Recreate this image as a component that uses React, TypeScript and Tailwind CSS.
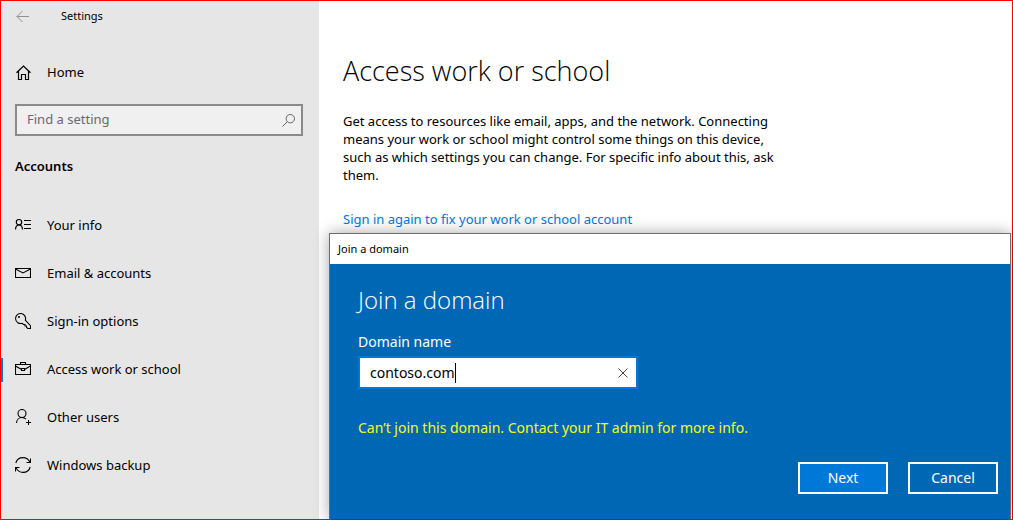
import type { ReactNode } from "react";

type IconProps = { children: ReactNode; size?: number };

function Icon({ children, size = 16 }: IconProps) {
  return (
    <svg
      width={size}
      height={size}
      viewBox={`0 0 ${size} ${size}`}
      fill="none"
      stroke="currentColor"
      strokeWidth="1"
      aria-hidden="true"
      className="shrink-0"
    >
      {children}
    </svg>
  );
}

const HomeIcon = () => (
  <Icon>
    <path d="M1.5 7.8 8.5 1l7 6.8M3.5 6v8.5h3v-5h4v5h3V6" strokeWidth="1.2" />
  </Icon>
);

const InfoIcon = () => (
  <Icon>
    <circle cx="4" cy="5.2" r="2.7" strokeWidth="1.2" />
    <path d="M.5 12.500C.6 9.800 2 8 4 8s3.400 1.800 3.500 4.500" strokeWidth="1.2" />
    <path d="M9 3.500h7M9 7.500h7M9 11.500h7" />
  </Icon>
);

const MailIcon = () => (
  <Icon>
    <path d="M.5 3.500h15v9H.5zM.5 4 8 8l7.500-4" strokeWidth="1.1" />
  </Icon>
);

const KeyIcon = () => (
  <Icon>
    <path
      d="M10.300 7.200a5 5 0 1 0-3.200 3.100l1.400 1.200h1.500v1.500h1.500v1.300l1.300 1.200h2.700v-2.800z"
      strokeWidth="1.1"
    />
    <path d="M3 4h2M4 3v2" />
  </Icon>
);

const BriefcaseIcon = () => (
  <Icon>
    <path
      d="M.5 3.500h15v10H.5zM5.500 3.500v-2h5v2M.5 5 6.500 8.500m3 0 6-3.500M6.500 7.500h3v2h-3z"
      strokeWidth="1.1"
    />
  </Icon>
);

const OtherUsersIcon = () => (
  <Icon>
    <circle cx="7" cy="4.500" r="4" strokeWidth="1.1" />
    <path d="M1.500 14C1.600 10.800 4 8.500 7 8.500c1.600 0 3 .6 4 1.700" strokeWidth="1.1" />
    <path d="M11 13.500h5M13.500 11v5" />
  </Icon>
);

const SyncIcon = () => (
  <Icon>
    <path
      d="M.8 6C1.700 2.800 4.600.6 8 .6c3.200 0 5.700 1.800 7 4.800M15.200 10c-.9 3.200-3.800 5.400-7.200 5.400-3.200 0-5.700-1.800-7-4.800M15.500 1.500v4h-4M.5 14.500v-4h4"
      strokeWidth="1.1"
    />
  </Icon>
);

const navItems = [
  { label: "Your info", icon: <InfoIcon /> },
  { label: "Email & accounts", icon: <MailIcon /> },
  { label: "Sign-in options", icon: <KeyIcon /> },
  { label: "Access work or school", icon: <BriefcaseIcon />, current: true },
  { label: "Other users", icon: <OtherUsersIcon /> },
  { label: "Windows backup", icon: <SyncIcon /> },
];

function Sidebar() {
  return (
    <aside className="w-[318px] shrink-0 bg-[#e6e6e6] text-[13px] text-black">
      <header className="flex h-[30px] items-center gap-8 pl-[15px] text-[11px]">
        <button type="button" aria-label="Back" className="text-[#8f8f8f]">
          <Icon size={13}>
            <path d="M.8 6.500H13M6.500 1 1 6.500 6.500 12" />
          </Icon>
        </button>
        <span>Settings</span>
      </header>

      <a href="#home" className="mt-[18px] flex h-12 items-center gap-4 pl-[14px]">
        <HomeIcon />
        Home
      </a>

      <label className="mt-[7px] mr-4 ml-[14px] flex h-8 items-center border-2 border-[#8a8a8a] bg-[#f0f0f0] pr-[6px] pl-[10px]">
        <input
          type="text"
          aria-label="Find a setting"
          placeholder="Find a setting"
          className="min-w-0 flex-1 bg-transparent outline-none placeholder:text-[#6a6a6a]"
        />
        <span className="text-[#666666]">
          <Icon size={13}>
            <circle cx="8.300" cy="4.700" r="4.200" />
            <path d="M5.300 7.700.5 12.500" />
          </Icon>
        </span>
      </label>

      <h2 className="mt-5 pl-[14px] leading-5 font-semibold">Accounts</h2>

      <nav className="mt-[26px]">
        {navItems.map(({ label, icon, current }) => (
          <a
            key={label}
            href="#accounts"
            aria-current={current ? "page" : undefined}
            className="flex h-12 items-center"
          >
            <span className={current ? "h-6 w-[2px] bg-[#0078d7]" : "h-6 w-[2px]"} />
            <span className="flex items-center gap-4 pl-3">
              <span className="pb-[2px]">{icon}</span>
              {label}
            </span>
          </a>
        ))}
      </nav>
    </aside>
  );
}

function JoinDomainDialog() {
  return (
    <section
      role="dialog"
      aria-labelledby="dialog-title"
      className="mt-1 mr-px ml-[10px] flex flex-1 flex-col border border-b-0 border-[#6d6d6d] bg-[#0067b5] shadow-[0_0_14px_rgba(0,0,0,0.35)]"
    >
      <div className="flex h-[30px] items-center bg-white pl-2 text-[11px] text-black">Join a domain</div>
      <form className="flex flex-1 flex-col pt-5 pr-3 pl-7 text-sm text-white" onSubmit={(e) => e.preventDefault()}>
        <h2 id="dialog-title" className="font-['Open_Sans',sans-serif] text-2xl font-light">
          Join a domain
        </h2>
        <label htmlFor="domain" className="mt-4 leading-5">
          Domain name
        </label>
        <div className="mt-1 flex h-[33px] w-[280px] items-center border-2 border-[#0078d7] bg-white pr-2 pl-[10px] text-black">
          <input
            id="domain"
            type="text"
            defaultValue="contoso.com"
            className="field-sizing-content max-w-[230px] bg-transparent caret-transparent outline-none"
          />
          <span className="h-5 w-px bg-black" />
          <button type="button" aria-label="Clear" className="ml-auto text-[#444444]">
            <Icon size={10}>
              <path d="m.5.5 9 9m0-9-9 9" />
            </Icon>
          </button>
        </div>
        <p className="mt-[29px] leading-5 text-[#f5fb1a]">Can’t join this domain. Contact your IT admin for more info.</p>
        <div className="mt-6 flex justify-end gap-5">
          <button type="submit" className="h-8 w-[90px] border-2 border-white bg-[#0078d7]">
            Next
          </button>
          <button type="button" className="h-8 w-[90px] border-2 border-white">
            Cancel
          </button>
        </div>
      </form>
    </section>
  );
}

export default function App() {
  return (
    <div className="flex min-h-screen border border-[#ff0000] bg-white font-['Noto_Sans','Open_Sans',sans-serif]">
      <Sidebar />
      <main className="flex min-w-0 flex-1 flex-col text-black">
        <div className="pr-6 pl-6">
          <h1 className="mt-[50px] font-['Open_Sans',sans-serif] text-[27px] leading-10 font-light">
            Access work or school
          </h1>
          <p className="mt-[21px] max-w-[440px] text-[13px] leading-[18px]">
            Get access to resources like email, apps, and the network. Connecting means your work or school might
            control some things on this device, such as which settings you can change. For specific info about this,
            ask them.
          </p>
          <a href="#sign-in" className="mt-[25px] block text-[13px] leading-5 text-[#0078d7]">
            Sign in again to fix your work or school account
          </a>
        </div>
        <JoinDomainDialog />
      </main>
    </div>
  );
}
